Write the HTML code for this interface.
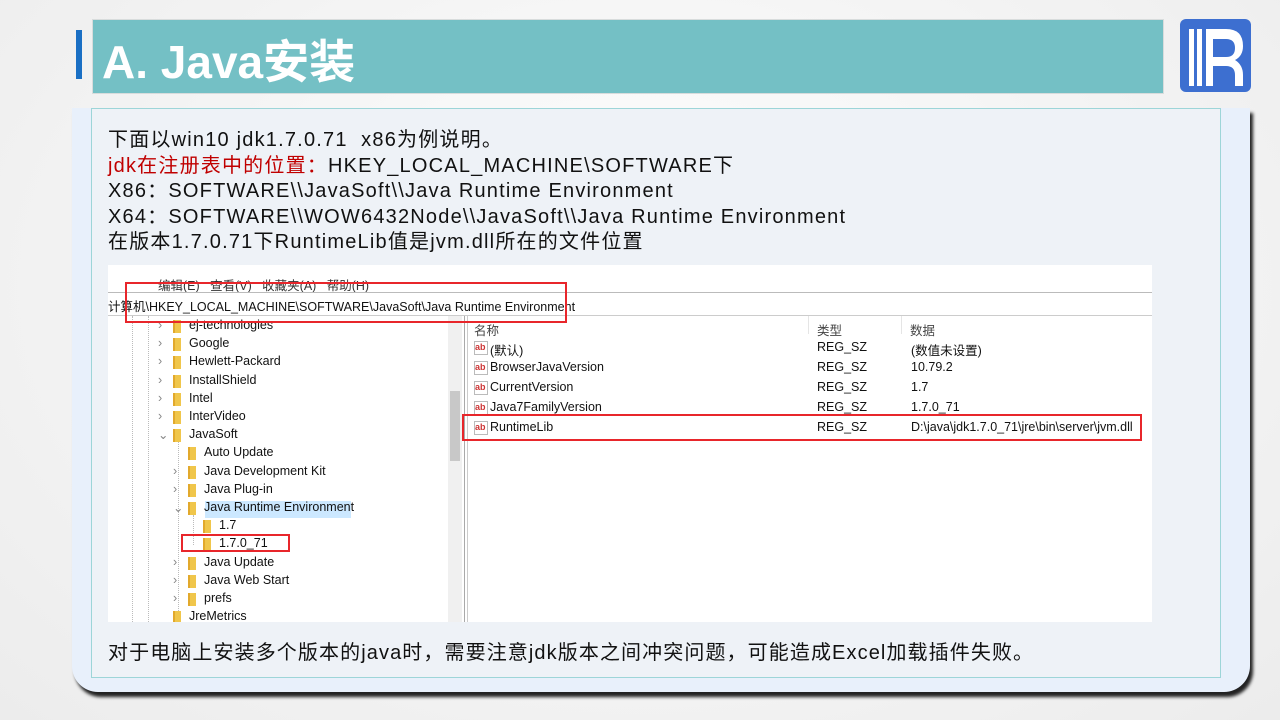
<!DOCTYPE html>
<html><head><meta charset="utf-8"><style>
*{margin:0;padding:0;box-sizing:border-box}
body{width:1280px;height:720px;overflow:hidden;position:relative;background:radial-gradient(ellipse at 50% 40%,#ffffff 0%,#f3f3f3 60%,#ececec 100%);font-family:"Liberation Sans","Noto Sans CJK SC",sans-serif}
.abs{position:absolute}
.title{left:92px;top:19px;width:1072px;height:75px;background:#74c0c5;border:1px solid #d8dcdc}
.title span{position:absolute;left:9px;top:6px;color:#fff;font-weight:bold;font-size:46px;letter-spacing:0px;font-family:"Liberation Sans","Noto Sans CJK SC",sans-serif}
.bar{left:76px;top:30px;width:6px;height:49px;background:#1a6fc4}
.card{left:72px;top:108px;width:1178px;height:584px;background:#e8f0fb;border-radius:0 0 26px 26px;box-shadow:3px 5px 3px #222}
.inner{left:91px;top:108px;width:1130px;height:570px;background:#eef2f7;border:1px solid #9dd5d8}
.txt{left:108px;font-size:20px;color:#111;white-space:pre;line-height:25.5px;letter-spacing:1.2px}
.shot{left:108px;top:265px;width:1044px;height:357px;background:#fff;overflow:hidden;font-family:"Liberation Sans","Noto Sans CJK SC",sans-serif;font-size:12.5px;color:#111}
.shot .t{position:absolute;white-space:pre}
.fold{position:absolute;width:8px;height:13px;background:#f0c64b;border-left:2px solid #e2a92c}
.red{position:absolute;border:2px solid #e8262b}
</style></head><body>
<div class="abs title"><span>A. Java安装</span></div>
<div class="abs bar"></div>
<svg class="abs" style="left:1180px;top:19px" width="71" height="73" viewBox="0 0 71 73">
<rect x="0" y="0" width="71" height="73" rx="6" fill="#3d6fd0"/>
<rect x="9" y="10" width="5" height="57" fill="#fff"/>
<rect x="17" y="10" width="5" height="57" fill="#fff"/>
<path d="M26 10 H46 Q63 10 63 27 Q63 37 55 41 Q63 46 63 56 V67 H55 V56 Q55 47 46 47 H33 V67 H26 Z M33 20 V38 H46 Q55 38 55 29 Q55 20 46 20 Z" fill="#fff"/>
</svg>
<div class="abs card"></div>
<div class="abs inner"></div>
<div class="abs txt" style="top:128px">下面以win10 jdk1.7.0.71  x86为例说明。
<span style="color:#c00000">jdk在注册表中的位置：</span>HKEY_LOCAL_MACHINE\SOFTWARE下
X86：SOFTWARE\\JavaSoft\\Java Runtime Environment
X64：SOFTWARE\\WOW6432Node\\JavaSoft\\Java Runtime Environment
在版本1.7.0.71下RuntimeLib值是jvm.dll所在的文件位置</div>
<div class="abs shot">
<div class="t" style="left:50px;top:10px;color:#333">编辑(E)   查看(V)   收藏夹(A)   帮助(H)</div>
<div class="abs" style="left:0;top:27px;width:1044px;height:1px;background:#bbb"></div>
<div class="t" style="left:0;top:31px">计算机\HKEY_LOCAL_MACHINE\SOFTWARE\JavaSoft\Java Runtime Environment</div>
<div class="abs" style="left:0;top:50px;width:1044px;height:1px;background:#ccc"></div>
<div class="abs" style="left:340px;top:51px;width:14px;height:306px;background:#f0f0f0"></div>
<div class="abs" style="left:342px;top:126px;width:10px;height:70px;background:#c8c8c8"></div>
<div class="abs" style="left:356px;top:51px;width:4px;height:306px;border-left:1px solid #aaa;border-right:1px solid #ccc"></div>
<div class="abs" style="left:24px;top:51px;width:1px;height:306px;border-left:1px dotted #bbb"></div>
<div class="abs" style="left:40px;top:51px;width:1px;height:306px;border-left:1px dotted #bbb"></div>
<div class="abs" style="left:70px;top:176px;width:1px;height:180px;border-left:1px dotted #bbb"></div>
<div class="abs" style="left:85px;top:250px;width:1px;height:30px;border-left:1px dotted #bbb"></div>
<div class="abs" style="left:97px;top:236px;width:146px;height:17px;background:#cce8ff"></div>
<div id="tree"></div>
<div class="t" style="left:366px;top:55px;color:#444">名称</div>
<div class="t" style="left:709px;top:55px;color:#444">类型</div>
<div class="t" style="left:802px;top:55px;color:#444">数据</div>
<div class="abs" style="left:700px;top:51px;width:1px;height:18px;background:#e5e5e5"></div>
<div class="abs" style="left:793px;top:51px;width:1px;height:18px;background:#e5e5e5"></div>
</div>
<div class="abs txt" style="top:641px;letter-spacing:1.1px">对于电脑上安装多个版本的java时，需要注意jdk版本之间冲突问题，可能造成Excel加载插件失败。</div>
<div class="abs red" style="left:125px;top:282px;width:442px;height:41px"></div>
<div class="abs red" style="left:462px;top:414px;width:680px;height:27px"></div>
<div class="abs red" style="left:181px;top:534px;width:109px;height:18px"></div>
<script>
var rows=[["ej-technologies",1,">"],["Google",1,">"],["Hewlett-Packard",1,">"],["InstallShield",1,">"],["Intel",1,">"],["InterVideo",1,">"],["JavaSoft",1,"v"],["Auto Update",2,""],["Java Development Kit",2,">"],["Java Plug-in",2,">"],["Java Runtime Environment",2,"v"],["1.7",3,""],["1.7.0_71",3,""],["Java Update",2,">"],["Java Web Start",2,">"],["prefs",2,">"],["JreMetrics",1,""]];
var h="";rows.forEach(function(r,i){var y=53+i*18.2;var fx=r[1]==1?65:r[1]==2?80:95;
if(r[2])h+='<div class="t" style="left:'+(fx-15)+'px;top:'+(y)+'px;color:#888">'+(r[2]=="v"?"⌄":"›")+'</div>';
h+='<div class="fold" style="left:'+fx+'px;top:'+(y+2)+'px"></div><div class="t" style="left:'+(fx+16)+'px;top:'+y+'px">'+r[0]+'</div>';});
var R=[["(默认)","(数值未设置)"],["BrowserJavaVersion","10.79.2"],["CurrentVersion","1.7"],["Java7FamilyVersion","1.7.0_71"],["RuntimeLib","D:\\java\\jdk1.7.0_71\\jre\\bin\\server\\jvm.dll"]];
R.forEach(function(r,i){var y=75+i*20;h+='<div class="abs" style="left:366px;top:'+(y+1)+'px;width:14px;height:14px;border:1px solid #bbb;background:#fff;color:#c33;font-size:9px;font-weight:bold;line-height:10px">ab</div><div class="t" style="left:382px;top:'+y+'px">'+r[0]+'</div><div class="t" style="left:709px;top:'+y+'px">REG_SZ</div><div class="t" style="left:803px;top:'+y+'px">'+r[1]+'</div>';});
document.getElementById("tree").innerHTML=h;
</script>
</body></html>
